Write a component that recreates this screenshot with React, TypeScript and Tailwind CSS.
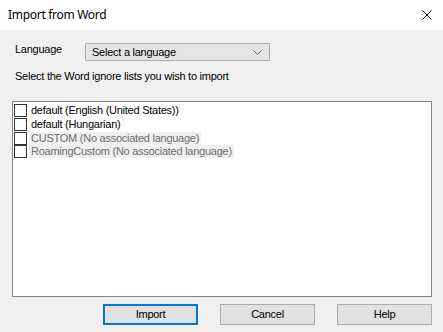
const ITEMS = [
  { label: "default (English (United States))", enabled: true },
  { label: "default (Hungarian)", enabled: true },
  { label: "CUSTOM (No associated language)", enabled: false },
  { label: "RoamingCustom (No associated language)", enabled: false },
];

export default function App() {
  return (
    <div
      className="w-[443px] h-[332px] bg-[#f0f0f0] flex flex-col text-[11px] tracking-[-0.25px] text-black"
      style={{ fontFamily: '"Liberation Sans", Arial, sans-serif' }}
    >
      {/* Title bar */}
      <div className="h-[30px] bg-white flex items-center justify-between pl-[8px] pr-[10px] tracking-normal">
        <span className="font-['Noto_Sans',sans-serif] text-[12px] tracking-[-0.3px] leading-none text-black">
          Import from Word
        </span>
        <svg width="10" height="10" viewBox="0 0 10 10" className="mr-[1px]">
          <path d="M0.5 0.5 L9.5 9.5 M9.5 0.5 L0.5 9.5" stroke="#000" strokeWidth="1" />
        </svg>
      </div>

      {/* Language row */}
      <div className="flex items-center pl-[15px] mt-[13px] h-[18px]">
        <span className="w-[70px] -mt-[5px]">Language</span>
        <div className="w-[185px] h-[18px] bg-[#e5e5e5] border border-[#acacac] flex items-center justify-between pl-[6px] pr-[7px]">
          <span>Select a language</span>
          <svg width="9" height="5" viewBox="0 0 9 5">
            <path d="M0.5 0.5 L4.5 4.5 L8.5 0.5" stroke="#606060" fill="none" strokeWidth="1" />
          </svg>
        </div>
      </div>

      <div className="pl-[15px] mt-[8px] leading-[14px]">Select the Word ignore lists you wish to import</div>

      {/* List box */}
      <div className="mx-[12px] mt-[18px] h-[196px] w-[420px] bg-white border border-[#828790] pt-[2px] pl-[1px]">
        {ITEMS.map((item) => (
          <div key={item.label} className="flex items-center h-[13.67px]">
            <div className="w-[13px] h-[13px] border border-[#333] bg-white shrink-0" />
            <span
              className={
                item.enabled
                  ? "ml-[2px] px-[2px] leading-[13px]"
                  : "ml-[2px] px-[2px] leading-[13px] bg-[#f0f0f0] text-[#6d6d6d]"
              }
            >
              {item.label}
            </span>
          </div>
        ))}
      </div>

      {/* Buttons */}
      <div className="flex justify-end gap-[22px] pr-[11px] mt-[7px]">
        <button className="w-[95px] h-[21px] bg-[#e1e1e1] border-2 border-[#0078d7] flex items-center justify-center">
          Import
        </button>
        <button className="w-[95px] h-[21px] bg-[#e1e1e1] border border-[#adadad] flex items-center justify-center">
          Cancel
        </button>
        <button className="w-[95px] h-[21px] bg-[#e1e1e1] border border-[#adadad] flex items-center justify-center">
          Help
        </button>
      </div>
    </div>
  );
}
